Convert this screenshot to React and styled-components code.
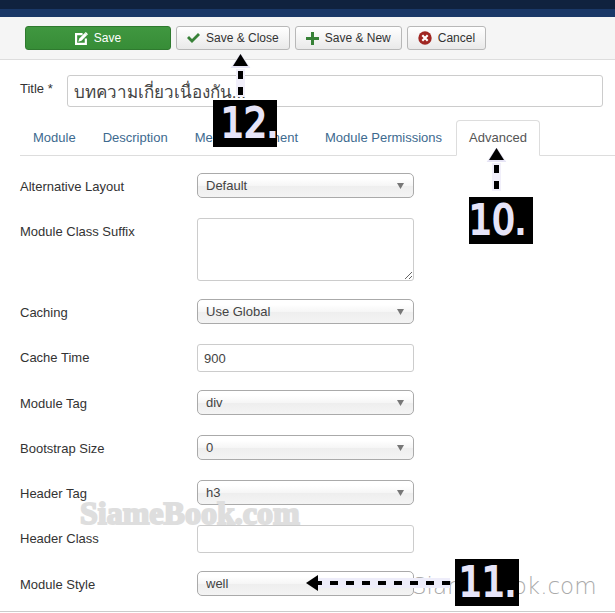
import React, { Fragment, useState } from 'react';
import styled, { createGlobalStyle } from 'styled-components';

const GlobalStyle = createGlobalStyle`
  * {
    box-sizing: border-box;
  }

  body {
    margin: 0;
    background: #fff;
    color: #333;
    font-family: "Liberation Sans", Arial, "Noto Sans", sans-serif;
    font-size: 13px;
    line-height: 18px;
  }

  button, input, select, textarea {
    font: inherit;
    color: #444;
  }
`;

const tabs = ['Module', 'Description', 'Menu Assignment', 'Module Permissions', 'Advanced'];

const fields = [
  { id: 'layout', label: 'Alternative Layout', type: 'select', value: 'Default' },
  { id: 'suffix', label: 'Module Class Suffix', type: 'textarea', value: '' },
  { id: 'caching', label: 'Caching', type: 'select', value: 'Use Global' },
  { id: 'cache-time', label: 'Cache Time', type: 'input', value: '900' },
  { id: 'module-tag', label: 'Module Tag', type: 'select', value: 'div' },
  { id: 'bootstrap-size', label: 'Bootstrap Size', type: 'select', value: '0' },
  { id: 'header-tag', label: 'Header Tag', type: 'select', value: 'h3' },
  { id: 'header-class', label: 'Header Class', type: 'input', value: '' },
  { id: 'module-style', label: 'Module Style', type: 'select', value: 'well' },
];

const EditIcon = () => (
  <svg width="13" height="13" viewBox="0 0 12 12" aria-hidden="true">
    <path d="M0 1h7v2H2v7h7V6h2v6H0z" fill="#fff" />
    <path d="M3 9l1-3 5-5 2 2-5 5z" fill="#fff" />
    <path d="M9 1l1-1 2 2-1 1z" fill="#fff" />
  </svg>
);

const CheckIcon = () => (
  <svg width="13" height="12" viewBox="0 0 13 12" aria-hidden="true">
    <path d="M0 6l2-2 3 3 6-6 2 2-8 8z" fill="#378137" />
  </svg>
);

const PlusIcon = () => (
  <svg width="13" height="13" viewBox="0 0 13 13" aria-hidden="true">
    <path d="M5 0h3v5h5v3H8v5H5V8H0V5h5z" fill="#378137" />
  </svg>
);

const CancelIcon = () => (
  <svg width="14" height="14" viewBox="0 0 13 13" aria-hidden="true">
    <circle cx="6.5" cy="6.5" r="6.2" fill="#a02622" />
    <path d="M4 4l5 5M9 4l-5 5" stroke="#fff" strokeWidth="2" />
  </svg>
);

const UpArrow = () => (
  <svg width="21" height="44" viewBox="0 0 21 44" aria-hidden="true">
    <path d="M10.5 1l8 12h-16z" stroke="#e6e4f5" strokeWidth="2" fill="#e6e4f5" />
    <path d="M6 15h9v28H6z" fill="#f1effa" />
    <path d="M10.5 0L18 12H3z" fill="#000" />
    <path d="M8 17h5v8H8zM8 33h5v8H8z" fill="#000" />
  </svg>
);

const LeftArrow = () => (
  <svg width="145" height="16" viewBox="0 0 145 16" aria-hidden="true">
    <path d="M10 8h134" stroke="#eeedfa" strokeWidth="10" />
    <path d="M0 8l12-8v16z" fill="#000" />
    <path d="M8 8h136" stroke="#000" strokeWidth="4" strokeDasharray="8 8" />
  </svg>
);

const Field = ({ field }) => {
  const [value, setValue] = useState(field.value);
  const props = { id: field.id, value, onChange: e => setValue(e.target.value) };

  if (field.type === 'textarea') return <TextArea {...props} />;
  if (field.type === 'input') return <TextInput type="text" {...props} />;
  return (
    <SelectBox>
      <Select {...props}>
        <option>{field.value}</option>
      </Select>
      <Caret width="7" height="6" viewBox="0 0 7 6" aria-hidden="true">
        <path d="M0 0h7L3.5 6z" fill="#777" />
      </Caret>
    </SelectBox>
  );
};

const App = () => {
  const [title, setTitle] = useState('บทความเกี่ยวเนื่องกัน...');
  const [active, setActive] = useState('Advanced');

  return (
    <Page>
      <GlobalStyle />
      <Navbar />
      <Toolbar>
        <Button $primary type="button"><EditIcon />Save</Button>
        <Anchor>
          <Button type="button"><CheckIcon />Save &amp; Close</Button>
          <SaveCallout>
            <UpArrow />
            <Badge $indent="8px">12.</Badge>
          </SaveCallout>
        </Anchor>
        <Button type="button"><PlusIcon />Save &amp; New</Button>
        <Button type="button"><CancelIcon />Cancel</Button>
      </Toolbar>

      <Content>
        <TitleRow>
          <label htmlFor="title">Title *</label>
          <TitleInput id="title" type="text" value={title} onChange={e => setTitle(e.target.value)} />
        </TitleRow>

        <Tabs role="tablist">
          {tabs.map(tab => (
            <Anchor key={tab}>
              <Tab type="button" role="tab" aria-selected={tab === active}
                $active={tab === active} onClick={() => setActive(tab)}>{tab}</Tab>
              {tab === 'Advanced' && (
                <TabCallout>
                  <UpArrow />
                  <Badge>10.</Badge>
                </TabCallout>
              )}
            </Anchor>
          ))}
        </Tabs>

        <Form>
          {fields.map(field => (
            <Row key={field.id}>
              <Label htmlFor={field.id}>{field.label}</Label>
              <Control>
                <Field field={field} />
                {field.id === 'header-class' && <SerifMark>SiameBook.com</SerifMark>}
                {field.id === 'module-style' && (
                  <Fragment>
                    <LightMark>SiameBook.com</LightMark>
                    <StyleCallout>
                      <LeftArrow />
                      <Badge $indent="4px">11.</Badge>
                    </StyleCallout>
                  </Fragment>
                )}
              </Control>
            </Row>
          ))}
        </Form>
      </Content>
    </Page>
  );
};

const Page = styled.div`
  width: 100%;
  overflow: hidden;
  border-bottom: 1px solid #ccc;
`;

const Navbar = styled.header`
  height: 17px;
  background: #10223e;
  border-bottom: 8px solid #1a3867;
`;

const Toolbar = styled.div`
  display: flex;
  gap: 5px;
  padding: 9px 25px;
  background: #f5f5f5;
  border-bottom: 1px solid #ddd;
`;

const Anchor = styled.div`
  position: relative;
  display: flex;
`;

const Button = styled.button`
  display: flex;
  align-items: center;
  justify-content: center;
  gap: 6px;
  height: 24px;
  min-width: ${p => (p.$primary ? '146px' : '0')};
  padding: 0 10px;
  border: 1px solid ${p => (p.$primary ? '#2f7a2f' : '#b8b8b8')};
  border-radius: 3px;
  background: ${p => (p.$primary
    ? 'linear-gradient(#409740, #378d37)'
    : 'linear-gradient(#fff, #e9e9e9)')};
  color: ${p => (p.$primary ? '#fff' : '#333')};
  font-size: 12px;
  white-space: nowrap;
  cursor: pointer;
`;

const Content = styled.main`
  padding: 15px 0 13px 20px;
`;

const TitleRow = styled.div`
  display: flex;
  gap: 14px;
  padding-right: 12px;

  label {
    padding-top: 5px;
    white-space: nowrap;
  }
`;

const inputStyles = `
  border: 1px solid #ccc;
  border-radius: 3px;
  background: #fff;
  outline: none;
`;

const TitleInput = styled.input`
  ${inputStyles}
  flex: 1;
  min-width: 0;
  height: 32px;
  padding: 0 6px;
  font-size: 17px;
`;

const Tabs = styled.div`
  display: flex;
  gap: 1px;
  margin-top: 13px;
  border-bottom: 1px solid #ddd;
`;

const Tab = styled.button`
  margin-bottom: -1px;
  padding: 8px 12px;
  border: 1px solid ${p => (p.$active ? '#ddd' : 'transparent')};
  border-bottom-color: ${p => (p.$active ? '#fff' : 'transparent')};
  border-radius: 4px 4px 0 0;
  background: ${p => (p.$active ? '#fff' : 'transparent')};
  color: ${p => (p.$active ? '#555' : '#3d6a8f')};
  white-space: nowrap;
  cursor: pointer;
`;

const Form = styled.form`
  display: flex;
  flex-direction: column;
  gap: 18px;
  margin-top: 17px;
`;

const Row = styled.div`
  display: grid;
  grid-template-columns: 177px 217px;
`;

const Label = styled.label`
  padding-top: 5px;
`;

const Control = styled.div`
  position: relative;
  min-height: 27px;
`;

const TextInput = styled.input`
  ${inputStyles}
  display: block;
  width: 100%;
  height: 28px;
  padding: 0 6px;
`;

const TextArea = styled.textarea`
  ${inputStyles}
  display: block;
  width: 100%;
  height: 63px;
  padding: 4px 6px;
`;

const SelectBox = styled.div`
  display: grid;
  align-items: center;
`;

const Select = styled.select`
  grid-area: 1 / 1;
  appearance: none;
  width: 100%;
  height: 25px;
  padding: 0 24px 0 8px;
  border: 1px solid #aaa;
  border-radius: 5px;
  background: linear-gradient(#fff 20%, #f6f6f6 50%, #eee 52%, #f4f4f4 100%);
  outline: none;
`;

const Caret = styled.svg`
  grid-area: 1 / 1;
  justify-self: end;
  margin-right: 10px;
  pointer-events: none;
`;

const Badge = styled.span`
  width: 64px;
  padding-left: ${p => p.$indent || '0'};
  background: #000;
  color: #e6e4f8;
  font-family: "DejaVu Sans Condensed", "DejaVu Sans", sans-serif;
  font-size: 40px;
  line-height: 47px;
  -webkit-text-stroke: 2px #e6e4f8;
`;

const Callout = styled.div`
  position: absolute;
  z-index: 2;
  display: flex;
  align-items: center;
  pointer-events: none;
`;

const VerticalCallout = styled(Callout)`
  flex-direction: column;
  align-items: flex-start;

  svg {
    margin-left: 17px;
  }
`;

const SaveCallout = styled(VerticalCallout)`
  top: 28px;
  left: 37px;
  gap: 2px;
`;

const TabCallout = styled(VerticalCallout)`
  top: 28px;
  left: 13px;
  gap: 5px;
`;

const StyleCallout = styled(Callout)`
  top: -12px;
  left: 109px;
  gap: 4px;
`;

const Watermark = styled.span`
  position: absolute;
  z-index: 1;
  pointer-events: none;
  white-space: nowrap;
`;

const SerifMark = styled(Watermark)`
  top: -28px;
  left: -117px;
  color: #dedede;
  font: bold 32px/32px "Liberation Serif", serif;
  -webkit-text-stroke: 2px #dedede;
`;

const LightMark = styled(Watermark)`
  top: 1px;
  left: 215px;
  color: #aaa;
  font: 200 23px/28px "DejaVu Sans Light", "DejaVu Sans", sans-serif;
`;

export default App;
